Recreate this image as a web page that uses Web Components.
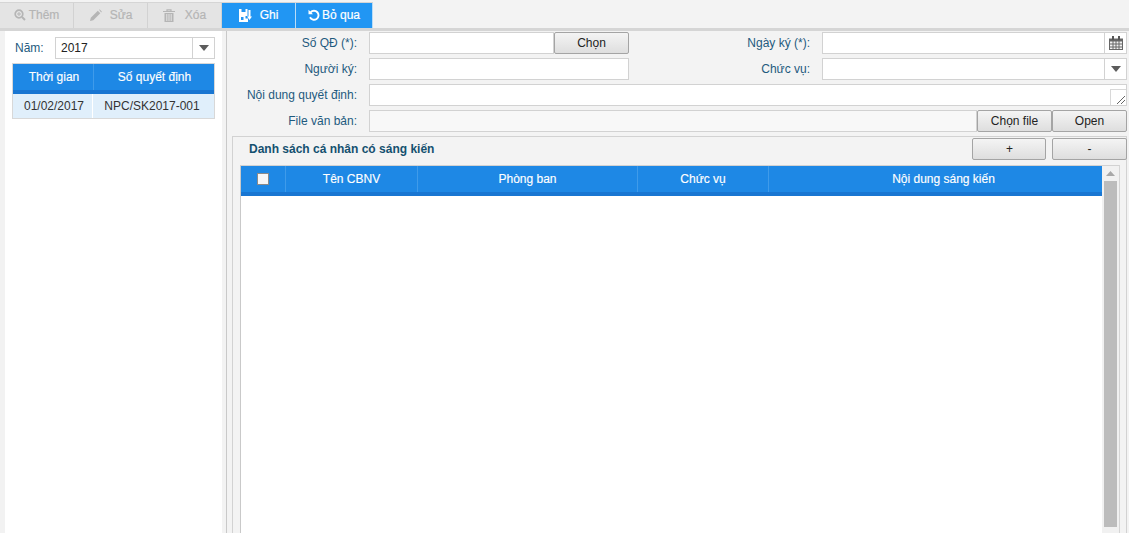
<!DOCTYPE html>
<html lang="vi"><head><meta charset="utf-8"><title>Sáng kiến</title>
<style>
html,body{margin:0;padding:0;height:533px;overflow:hidden;background:#f3f3f3;font:12px "Liberation Sans",Arial,sans-serif;color:#333}
app-shell{display:flex;flex-direction:column;height:533px}
</style></head><body>
<template id="t-tool"><style>
:host{display:flex;align-items:center;justify-content:center;gap:var(--g,3px);width:var(--w,74px);height:25px;box-sizing:border-box;padding-bottom:1px;background:#e4e4e4;color:#b5b5b5;font-size:12px;-webkit-text-stroke:.2px currentColor;border-right:1px solid #d2d2d2}
:host([primary]){background:#2196f3;color:#fff;border-right:1px solid #b9dcf7}
svg{display:block;flex:none}
</style><slot name="i"></slot><slot></slot></template>

<template id="t-btn"><style>
:host{display:flex;align-items:center;justify-content:center;box-sizing:border-box;height:22px;width:var(--w,75px);border:1px solid #a4a4a4;border-radius:2px;background:linear-gradient(#f4f4f4,#dedede);color:#222;font-size:12px;flex:none}
</style><slot></slot></template>

<template id="t-field"><style>
:host{display:flex;box-sizing:border-box;height:22px;border:1px solid #d2d2d2;background:var(--bg,#fff);flex:var(--fx,1 1 auto);width:var(--w,auto);font-size:12px;color:#222;min-width:0;position:relative}
.v{flex:1;padding-left:5px;line-height:20px;white-space:nowrap}
.a{flex:none;width:21px;border-left:1px solid #d2d2d2;display:none;align-items:center;justify-content:center}
:host([drop]) .a,:host([cal]) .a{display:flex}
:host([drop]) .c{display:block}.c,.k{display:none}
:host([cal]) .k{display:block}
.r{display:none;position:absolute;right:0;bottom:0;width:16px;height:16px;box-sizing:border-box;border:1px solid #d8d8d8;border-width:1px 0 0 1px;background:#fff}
:host([resize]) .r{display:block}
</style><div class="v"><slot></slot></div>
<div class="a"><svg class="c" width="10" height="6" viewBox="0 0 10 6"><path d="M0 0h10L5 6z" fill="#5c5c5c"/></svg>
<svg class="k" width="14" height="14" viewBox="0 0 14 14"><path d="M0 2.500h14V14H0z" fill="#666"/><path d="M3 0h2v4H3zM9 0h2v4H9z" fill="#555"/><path d="M1 5.500h2.500v2H1zM4.500 5.500H6.500v2h-2zM7.500 5.500h2v2h-2zM10.500 5.500H13v2h-2.500zM1 8.500h2.500v2H1zM4.500 8.500H6.500v2h-2zM7.500 8.500h2v2h-2zM10.500 8.500H13v2h-2.500zM1 11.500h2.500V13H1zM4.500 11.500H6.500V13h-2zM7.500 11.500h2V13h-2zM10.500 11.500H13V13h-2.500z" fill="#f2f2f2"/></svg></div>
<div class="r"><svg width="15" height="15" viewBox="0 0 15 15" style="display:block"><path d="M6 14 14 6M10 14l4-4" stroke="#666" fill="none"/></svg></div></template>

<template id="t-label"><style>
:host{display:block;width:var(--w,130px);flex:none;box-sizing:border-box;padding-right:12px;text-align:right;color:#1e5a7e;font-size:12px;line-height:22px;white-space:nowrap}
</style><slot></slot></template>

<template id="t-head"><style>
:host{display:grid;grid-template-columns:var(--cols);box-sizing:border-box;height:var(--h,30px);background:#1e88e5;border-bottom:4px solid #1976d2;color:#fff;font-size:12px;-webkit-text-stroke:.15px #fff}
</style><slot></slot></template>

<template id="t-hcell"><style>
:host{display:flex;align-items:center;justify-content:center;border-right:1px solid #3f9bea;box-sizing:border-box;white-space:nowrap}
:host(:last-child){border-right:0}
</style><slot></slot></template>

<template id="t-year"><style>
:host{display:flex;flex-direction:column;flex:none;width:222px;box-sizing:border-box;padding:6px 7px 0 7px;background:#fff;border-left:5px solid #f2f2f2;color:#333}
.row{display:flex;align-items:center;height:22px;margin-bottom:4px}
.l{width:43px;color:#1e5a7e;padding-left:3px;box-sizing:border-box;flex:none}
.t{border:1px solid #d8d8d8}
.r{display:grid;grid-template-columns:80px 121px;height:24px;background:#e0effb;color:#333}
.r>div{display:flex;align-items:center;justify-content:center}
.r>div:first-child{border-right:1px solid #fff;padding-left:3px}
.r>div:last-child{padding-right:3px}
</style><div class="row"><span class="l">Năm:</span><x-field drop style="--fx:1 1 auto">2017</x-field></div>
<div class="t"><x-head style="--h:30px;--cols:81px 120px"><x-hcell><span style="padding-left:2px">Thời gian</span></x-hcell><x-hcell><span style="padding-left:1px">Số quyết định</span></x-hcell></x-head>
<div class="r"><div>01/02/2017</div><div>NPC/SK2017-001</div></div></div></template>

<template id="t-form"><style>
:host{display:block;flex:1;min-width:0;border-left:1px solid #c9c9c9;margin-left:4px;padding-top:1px;box-sizing:border-box;background:#f3f3f3;overflow:hidden}
.rows{display:flex;flex-direction:column;gap:4px;padding-right:2px}
.row{display:flex}
.gb{margin:4px 2px 0 5px;border:1px solid #d2d2d2;border-bottom:0;height:500px;box-sizing:border-box}
.tb{display:flex;align-items:flex-start;height:28px;padding-top:1px;box-sizing:border-box;margin-right:-1px}
.title{font-weight:700;color:#14506f;margin-left:16px;margin-right:auto;white-space:nowrap;line-height:22px}
.list{display:flex;margin:0 0 0 7px;height:400px;border-left:1px solid #c9c9c9;border-top:1px solid #d2d2d2;width:878px;border-right:1px solid #d5d5d5}
.tw{flex:1;background:#fff;min-width:0}
.sb{flex:none;width:17px;background:#f1f1f1;display:flex;flex-direction:column;align-items:center}
.up{height:15px;display:flex;align-items:center;justify-content:center;flex:none}
.th{width:13px;height:346px;background:#bcbcbc;flex:none}
.cb{width:12px;height:12px;box-sizing:border-box;background:#f7f7f7;border:1px solid #8a8a8a;display:block}
</style>
<div class="rows">
<div class="row"><x-label style="--w:142px">Số QĐ (*):</x-label><x-field style="--fx:none;--w:185px"></x-field><x-btn>Chọn</x-btn><x-label style="--w:193px">Ngày ký (*):</x-label><x-field cal></x-field></div>
<div class="row"><x-label style="--w:142px">Người ký:</x-label><x-field style="--fx:none;--w:260px"></x-field><x-label style="--w:193px">Chức vụ:</x-label><x-field drop></x-field></div>
<div class="row"><x-label style="--w:142px">Nội dung quyết định:</x-label><x-field resize></x-field></div>
<div class="row"><x-label style="--w:142px">File văn bản:</x-label><x-field style="--bg:#f8f8f8"></x-field><x-btn>Chọn file</x-btn><x-btn>Open</x-btn></div>
</div>
<div class="gb"><div class="tb"><span class="title">Danh sách cá nhân có sáng kiến</span><x-btn style="--w:74px;padding-left:1px">+</x-btn><x-btn style="margin-left:6px">-</x-btn></div>
<div class="list"><div class="tw"><x-head style="--h:30px;--cols:45px 132px 220px 131px 333px"><x-hcell><span class="cb"></span></x-hcell><x-hcell>Tên CBNV</x-hcell><x-hcell>Phòng ban</x-hcell><x-hcell>Chức vụ</x-hcell><x-hcell><span style="padding-left:16px">Nội dung sáng kiến</span></x-hcell></x-head></div>
<div class="sb"><div class="up"><svg width="9" height="5" viewBox="0 0 9 5"><path d="M4.500 0 9 5H0z" fill="#a8a8a8"/></svg></div><div class="th"></div></div></div></div></template>

<app-shell>
<x-toolbar>
<x-tool><svg slot="i" width="12" height="12" viewBox="0 0 12 12"><circle cx="5" cy="5" r="3.800" fill="none" stroke="currentColor" stroke-width="1.700"/><path d="M8 8l3 3" stroke="currentColor" stroke-width="2"/><path d="M3 5h4M5 3v4" stroke="currentColor"/></svg>Thêm</x-tool>
<x-tool style="--g:8px"><svg slot="i" width="13" height="13" viewBox="0 0 13 13"><path d="M1 12l.8-3.300 7-7 2.500 2.500-7 7zM10 .8l.8-.4 2 2-.6 1z" fill="currentColor"/></svg>Sửa</x-tool>
<x-tool style="--g:10px"><svg slot="i" width="12" height="13" viewBox="0 0 12 13"><path d="M0 2.500h12M4 2.500V.8h4v1.700" fill="none" stroke="currentColor" stroke-width="1.200"/><path d="M1.500 4h9v9h-9z" fill="currentColor"/><path d="M3.800 5v7M6 5v7M8.200 5v7" stroke="#e4e4e4"/></svg>Xóa</x-tool>
<x-tool primary style="--g:8px"><svg slot="i" width="13" height="13" viewBox="0 0 13 13"><path d="M0 0h8.500v7H6.500V9.500H9V13H0z" fill="#fff"/><path d="M2.500 0h4v3h-4zM2 8h2.500v3H2z" fill="#2196f3"/><path d="M10.500 1v7" stroke="#fff" stroke-width="2"/><path d="M8 7.500h5L10.500 11z" fill="#fff"/></svg>Ghi</x-tool>
<x-tool primary style="--w:77px;--g:2px"><svg slot="i" width="12" height="12" viewBox="0 0 12 12"><path d="M2.600 3.300A4.500 4.500 0 1 1 2 8.300" fill="none" stroke="#fff" stroke-width="1.900"/><path d="M.5.800v4.500H5z" fill="#fff"/></svg>Bỏ qua</x-tool>
</x-toolbar>
<x-main><x-year></x-year><x-form></x-form></x-main>
</app-shell>
<script>
const def=(n,t)=>customElements.define(n,class extends HTMLElement{constructor(){super();this.attachShadow({mode:"open"}).appendChild(document.getElementById(t).content.cloneNode(true))}});
[["x-tool","t-tool"],["x-btn","t-btn"],["x-field","t-field"],["x-label","t-label"],["x-head","t-head"],["x-hcell","t-hcell"],["x-year","t-year"],["x-form","t-form"]].forEach(a=>def(...a));
customElements.define("x-toolbar",class extends HTMLElement{constructor(){super();this.attachShadow({mode:"open"}).innerHTML='<style>:host{display:flex;flex:none;height:31px;box-sizing:border-box;padding-top:2px;background:#f3f3f3;border-bottom:3px solid #d5d5d5}.b{display:flex;border-top:1px solid #d5d5d5;height:25px}</style><div class="b"><slot></slot></div>'}});
customElements.define("x-main",class extends HTMLElement{constructor(){super();this.attachShadow({mode:"open"}).innerHTML='<style>:host{display:flex;flex:1;min-height:0;background:#f3f3f3}</style><slot></slot>'}});
</script>
</body></html>
